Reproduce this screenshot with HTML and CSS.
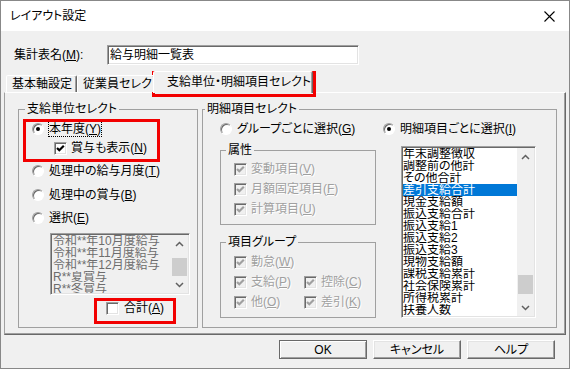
FILE: index.html
```html
<!DOCTYPE html>
<html lang="ja">
<head>
<meta charset="utf-8">
<title>レイアウト設定</title>
<link rel="stylesheet" href="styles.css">
</head>
<body>
<div class="win">
  <div class="titlebar">
    <span class="title">レイアウト設定</span>
    <svg class="close" width="11" height="11" viewBox="0 0 11 11"><path d="M0.5 0.5 L10.5 10.5 M10.5 0.5 L0.5 10.5" stroke="#000" stroke-width="1.1" fill="none"/></svg>
  </div>
  <div class="body">
    <div class="name-row">
      <span class="name-label">集計表名(<u>M</u>):</span>
      <div class="edit">給与明細一覧表</div>
    </div>
    <div class="tabs">
      <div class="tab t1">基本軸設定</div>
      <div class="tab t2">従業員セレクト</div>
      <div class="tab sel">支給単位・明細項目セレクト</div>
    </div>
    <div class="panel">
      <fieldset class="group g-left">
        <legend>支給単位セレクト</legend>
        <div class="col-left">
          <div class="opt r-year"><span class="radio on"></span><span class="focus">本年度(<u>Y</u>)</span></div>
          <div class="chk-row r-bonus"><span class="cb"><svg width="11" height="11" viewBox="0 0 11 11"><polyline points="2,5 4.3,7.3 8.8,2.8" fill="none" stroke="#000" stroke-width="2.2"/></svg></span><span>賞与も表示(<u>N</u>)</span></div>
          <div class="opt r-mid"><span class="radio"></span><span>処理中の給与月度(<u>T</u>)</span></div>
          <div class="opt r-mid"><span class="radio"></span><span>処理中の賞与(<u>B</u>)</span></div>
          <div class="opt r-sel"><span class="radio"></span><span>選択(<u>E</u>)</span></div>
          <div class="list list-left">
            <div class="items">
              <div class="item">令和**年10月度給与</div>
              <div class="item">令和**年11月度給与</div>
              <div class="item">令和**年12月度給与</div>
              <div class="item">R**夏賞与</div>
              <div class="item">R**冬賞与</div>
            </div>
            <div class="sb">
              <div class="sb-btn"><svg width="9" height="6" viewBox="0 0 9 6"><path d="M1 5 L4.5 1.5 L8 5" fill="none" stroke="#606060" stroke-width="1.5"/></svg></div>
              <div class="sb-track"><div class="thumb thumb-left"></div></div>
              <div class="sb-btn"><svg width="9" height="6" viewBox="0 0 9 6"><path d="M1 1 L4.5 4.5 L8 1" fill="none" stroke="#606060" stroke-width="1.5"/></svg></div>
            </div>
          </div>
          <div class="chk-row r-total"><span class="cb"></span><span>合計(<u>A</u>)</span></div>
        </div>
      </fieldset>
      <fieldset class="group g-right">
        <legend>明細項目セレクト</legend>
        <div class="col-right">
          <div class="radio-row">
            <div class="opt o-group"><span class="radio"></span><span>グループごとに選択(<u>G</u>)</span></div>
            <div class="opt"><span class="radio on"></span><span>明細項目ごとに選択(<u>I</u>)</span></div>
          </div>
          <div class="detail-row">
            <div class="subcol">
              <fieldset class="group sub g-attr">
                <legend>属性</legend>
                <div class="chk-row dis first-a"><span class="cb dis"><svg width="11" height="11" viewBox="0 0 11 11"><polyline points="2,5 4.3,7.3 8.8,2.8" fill="none" stroke="#a0a0a0" stroke-width="2.2"/></svg></span><span>変動項目(<u>V</u>)</span></div>
                <div class="chk-row dis next"><span class="cb dis"><svg width="11" height="11" viewBox="0 0 11 11"><polyline points="2,5 4.3,7.3 8.8,2.8" fill="none" stroke="#a0a0a0" stroke-width="2.2"/></svg></span><span>月額固定項目(<u>F</u>)</span></div>
                <div class="chk-row dis next"><span class="cb dis"><svg width="11" height="11" viewBox="0 0 11 11"><polyline points="2,5 4.3,7.3 8.8,2.8" fill="none" stroke="#a0a0a0" stroke-width="2.2"/></svg></span><span>計算項目(<u>U</u>)</span></div>
              </fieldset>
              <fieldset class="group sub g-item">
                <legend>項目グループ</legend>
                <div class="chk-row dis first-b"><span class="cb dis"><svg width="11" height="11" viewBox="0 0 11 11"><polyline points="2,5 4.3,7.3 8.8,2.8" fill="none" stroke="#a0a0a0" stroke-width="2.2"/></svg></span><span>勤怠(<u>W</u>)</span></div>
                <div class="pair next">
                  <div class="chk-row dis c1"><span class="cb dis"><svg width="11" height="11" viewBox="0 0 11 11"><polyline points="2,5 4.3,7.3 8.8,2.8" fill="none" stroke="#a0a0a0" stroke-width="2.2"/></svg></span><span>支給(<u>P</u>)</span></div>
                  <div class="chk-row dis"><span class="cb dis"><svg width="11" height="11" viewBox="0 0 11 11"><polyline points="2,5 4.3,7.3 8.8,2.8" fill="none" stroke="#a0a0a0" stroke-width="2.2"/></svg></span><span>控除(<u>C</u>)</span></div>
                </div>
                <div class="pair next">
                  <div class="chk-row dis c1"><span class="cb dis"><svg width="11" height="11" viewBox="0 0 11 11"><polyline points="2,5 4.3,7.3 8.8,2.8" fill="none" stroke="#a0a0a0" stroke-width="2.2"/></svg></span><span>他(<u>O</u>)</span></div>
                  <div class="chk-row dis"><span class="cb dis"><svg width="11" height="11" viewBox="0 0 11 11"><polyline points="2,5 4.3,7.3 8.8,2.8" fill="none" stroke="#a0a0a0" stroke-width="2.2"/></svg></span><span>差引(<u>K</u>)</span></div>
                </div>
              </fieldset>
            </div>
            <div class="list list-right">
              <div class="items">
                <div class="item">年末調整徴収</div>
                <div class="item">調整前の他計</div>
                <div class="item">その他合計</div>
                <div class="item selected">差引支給合計</div>
                <div class="item">現金支給額</div>
                <div class="item">振込支給合計</div>
                <div class="item">振込支給1</div>
                <div class="item">振込支給2</div>
                <div class="item">振込支給3</div>
                <div class="item">現物支給額</div>
                <div class="item">課税支給累計</div>
                <div class="item">社会保険累計</div>
                <div class="item">所得税累計</div>
                <div class="item">扶養人数</div>
              </div>
              <div class="sb">
                <div class="sb-btn"><svg width="9" height="6" viewBox="0 0 9 6"><path d="M1 5 L4.5 1.5 L8 5" fill="none" stroke="#606060" stroke-width="1.5"/></svg></div>
                <div class="sb-track"><div class="thumb thumb-right"></div></div>
                <div class="sb-btn"><svg width="9" height="6" viewBox="0 0 9 6"><path d="M1 1 L4.5 4.5 L8 1" fill="none" stroke="#606060" stroke-width="1.5"/></svg></div>
              </div>
            </div>
          </div>
        </div>
      </fieldset>
    </div>
    <div class="buttons">
      <button class="btn def">OK</button>
      <button class="btn">キャンセル</button>
      <button class="btn">ヘルプ</button>
    </div>
  </div>
  <div class="mark m-tab"></div>
  <div class="mark m-year"></div>
  <div class="mark m-total"></div>
</div>
</body>
</html>
```
FILE: styles.css
```css
* { box-sizing: border-box; }
html, body { margin: 0; padding: 0; }
body {
  background: #fff;
  font-family: "Liberation Sans", "Noto Sans CJK JP", sans-serif;
  font-size: 12px;
  line-height: 14px;
  color: #000;
  font-feature-settings: "palt" 1;
}
u { text-decoration-thickness: 1px; text-underline-offset: 1px; }

.win {
  position: relative;
  width: 570px;
  height: 369px;
  border: 1px solid #888;
  background: #f0f0f0;
  display: flex;
  flex-direction: column;
}
.titlebar {
  flex: none;
  height: 30px;
  background: #fff;
  display: flex;
  align-items: center;
  padding-left: 9px;
}
.title { flex: 1; }
.close { margin-right: 14px; }

.body { flex: 1; display: flex; flex-direction: column; }

.name-row {
  display: flex;
  align-items: center;
  height: 20px;
  margin-top: 14px;
  padding-left: 13px;
}
.name-label { width: 93px; }
.edit {
  width: 252px;
  height: 20px;
  background: #fff;
  border: 1px solid;
  border-color: #a0a0a0 #fff #fff #a0a0a0;
  box-shadow: inset 1px 1px 0 #696969, inset -1px -1px 0 #e3e3e3;
  padding: 2px 0 0 2px;
}

.tabs {
  position: relative;
  z-index: 1;
  display: flex;
  align-items: flex-end;
  height: 21px;
  margin-top: 6px;
  padding-left: 5px;
}
.tab {
  height: 17px;
  border: 1px solid;
  border-bottom: 0;
  border-color: #fff #696969 transparent #fff;
  border-radius: 2px 2px 0 0;
  box-shadow: inset -1px 0 0 #a0a0a0;
  background: #f0f0f0;
  padding: 1px 0 0 5px;
  white-space: nowrap;
  overflow: hidden;
}
.t1 { width: 71px; }
.t2 { width: 78px; }
.sel {
  width: 160px;
  height: 22px;
  margin-left: -2px;
  margin-bottom: -1px;
  padding: 3px 0 0 13px;
}

.panel {
  margin-left: 3px;
  width: 562px;
  height: 243px;
  border: 1px solid;
  border-color: #fff #696969 #696969 #a0a0a0;
  box-shadow: inset -1px -1px 0 #a0a0a0;
  display: flex;
  align-items: flex-start;
  gap: 4px;
  padding: 9px 0 0 13px;
}

.group {
  margin: 0;
  padding: 0;
  min-width: 0;
  border: 1px solid #a0a0a0;
}
.group > legend {
  padding: 0 2px;
  height: 14px;
  line-height: 14px;
}
.g-left { width: 180px; height: 226px; }
.g-left > legend { margin-left: 6px; }
.g-right { width: 355px; height: 226px; }
.g-right > legend { margin-left: 2px; }

.col-left { display: flex; flex-direction: column; align-items: flex-start; padding-left: 13px; }
.opt { display: flex; align-items: center; gap: 5px; height: 16px; white-space: nowrap; }
.r-year { margin-top: 5px; }
.r-bonus { margin-top: 4px; margin-left: 22px; height: 16px; }
.r-mid { margin-top: 8px; }
.r-sel { margin-top: 7px; }
.focus { outline: 1px dotted #000; outline-offset: 0; }

.radio {
  width: 12px;
  height: 12px;
  border-radius: 50%;
  border: 1px solid;
  border-color: #a0a0a0 #fff #fff #a0a0a0;
  box-shadow: inset 1px 1px 0 #696969;
  background: #fff;
  display: flex;
  align-items: center;
  justify-content: center;
  flex: none;
}
.radio.on::after {
  content: "";
  width: 4px;
  height: 4px;
  border-radius: 50%;
  background: #000;
}

.chk-row { display: flex; align-items: center; gap: 4px; height: 14px; white-space: nowrap; }
.cb {
  width: 13px;
  height: 13px;
  flex: none;
  border: 1px solid;
  border-color: #a0a0a0 #fff #fff #a0a0a0;
  box-shadow: inset 1px 1px 0 #696969, inset -1px -1px 0 #e3e3e3;
  background: #fff;
  display: flex;
}
.cb svg { display: block; }
.cb.dis { background: #f0f0f0; }
.chk-row.dis > span:last-child { color: #a0a0a0; text-shadow: 1px 1px 0 #fff; }
.r-total { margin-top: 5px; margin-left: 74px; height: 16px; gap: 5px; }

.list {
  display: flex;
  border: 1px solid;
  border-color: #a0a0a0 #fff #fff #a0a0a0;
  box-shadow: inset 1px 1px 0 #696969, inset -1px -1px 0 #e3e3e3;
  background: #fff;
  padding: 1px;
  overflow: hidden;
}
.items { flex: 1; overflow: hidden; }
.item { height: 12px; line-height: 12px; white-space: nowrap; overflow: hidden; }
.item.selected { background: #0078d7; color: #fff; }
.list-left {
  margin-top: 7px;
  margin-left: 18px;
  width: 140px;
  height: 62px;
  background: #f0f0f0;
}
.list-left .item { color: #6d6d6d; padding-left: 1px; }
.list-right {
  margin-left: 25px;
  margin-top: 3px;
  width: 135px;
  height: 172px;
}

.sb { width: 17px; flex: none; display: flex; flex-direction: column; background: #f0f0f0; }
.sb-btn { height: 17px; flex: none; display: flex; align-items: center; justify-content: center; }
.sb-track { flex: 1; padding: 0 1px; }
.thumb { background: #cdcdcd; }
.thumb-left { margin-top: 6px; height: 18px; }
.thumb-right { margin-top: 110px; height: 19px; }

.col-right { display: flex; flex-direction: column; }
.radio-row { display: flex; margin-top: 5px; padding-left: 17px; }
.o-group { width: 163px; }
.detail-row { display: flex; align-items: flex-start; margin-top: 6px; padding-left: 17px; }
.subcol { width: 156px; display: flex; flex-direction: column; }
.g-attr { height: 82px; padding-left: 13px; }
.g-item { height: 83px; margin-top: 10px; padding-left: 13px; }
.g-attr > legend, .g-item > legend { margin-left: -8px; }
.first-a { margin-top: 5px; }
.first-b { margin-top: 6px; }
.next { margin-top: 6px; }
.pair { display: flex; }
.c1 { width: 70px; }

.buttons {
  display: flex;
  justify-content: flex-end;
  gap: 6px;
  margin-top: 5px;
  padding-right: 14px;
}
.btn {
  width: 88px;
  height: 19px;
  font: inherit;
  line-height: 14px;
  color: #000;
  background: #f0f0f0;
  border: 1px solid;
  border-color: #fff #696969 #696969 #fff;
  box-shadow: inset -1px -1px 0 #a0a0a0, inset 1px 1px 0 #e3e3e3;
  padding: 0;
}
.btn.def { border-color: #696969; box-shadow: inset 1px 1px 0 #fff, inset -1px -1px 0 #a0a0a0; }

.mark {
  position: absolute;
  border: 3px solid #f20000;
  pointer-events: none;
}
.m-tab { left: 151px; top: 70px; width: 164px; height: 26px; }
.m-year { left: 22px; top: 118px; width: 137px; height: 43px; }
.m-total { left: 93px; top: 297px; width: 82px; height: 26px; }
```
